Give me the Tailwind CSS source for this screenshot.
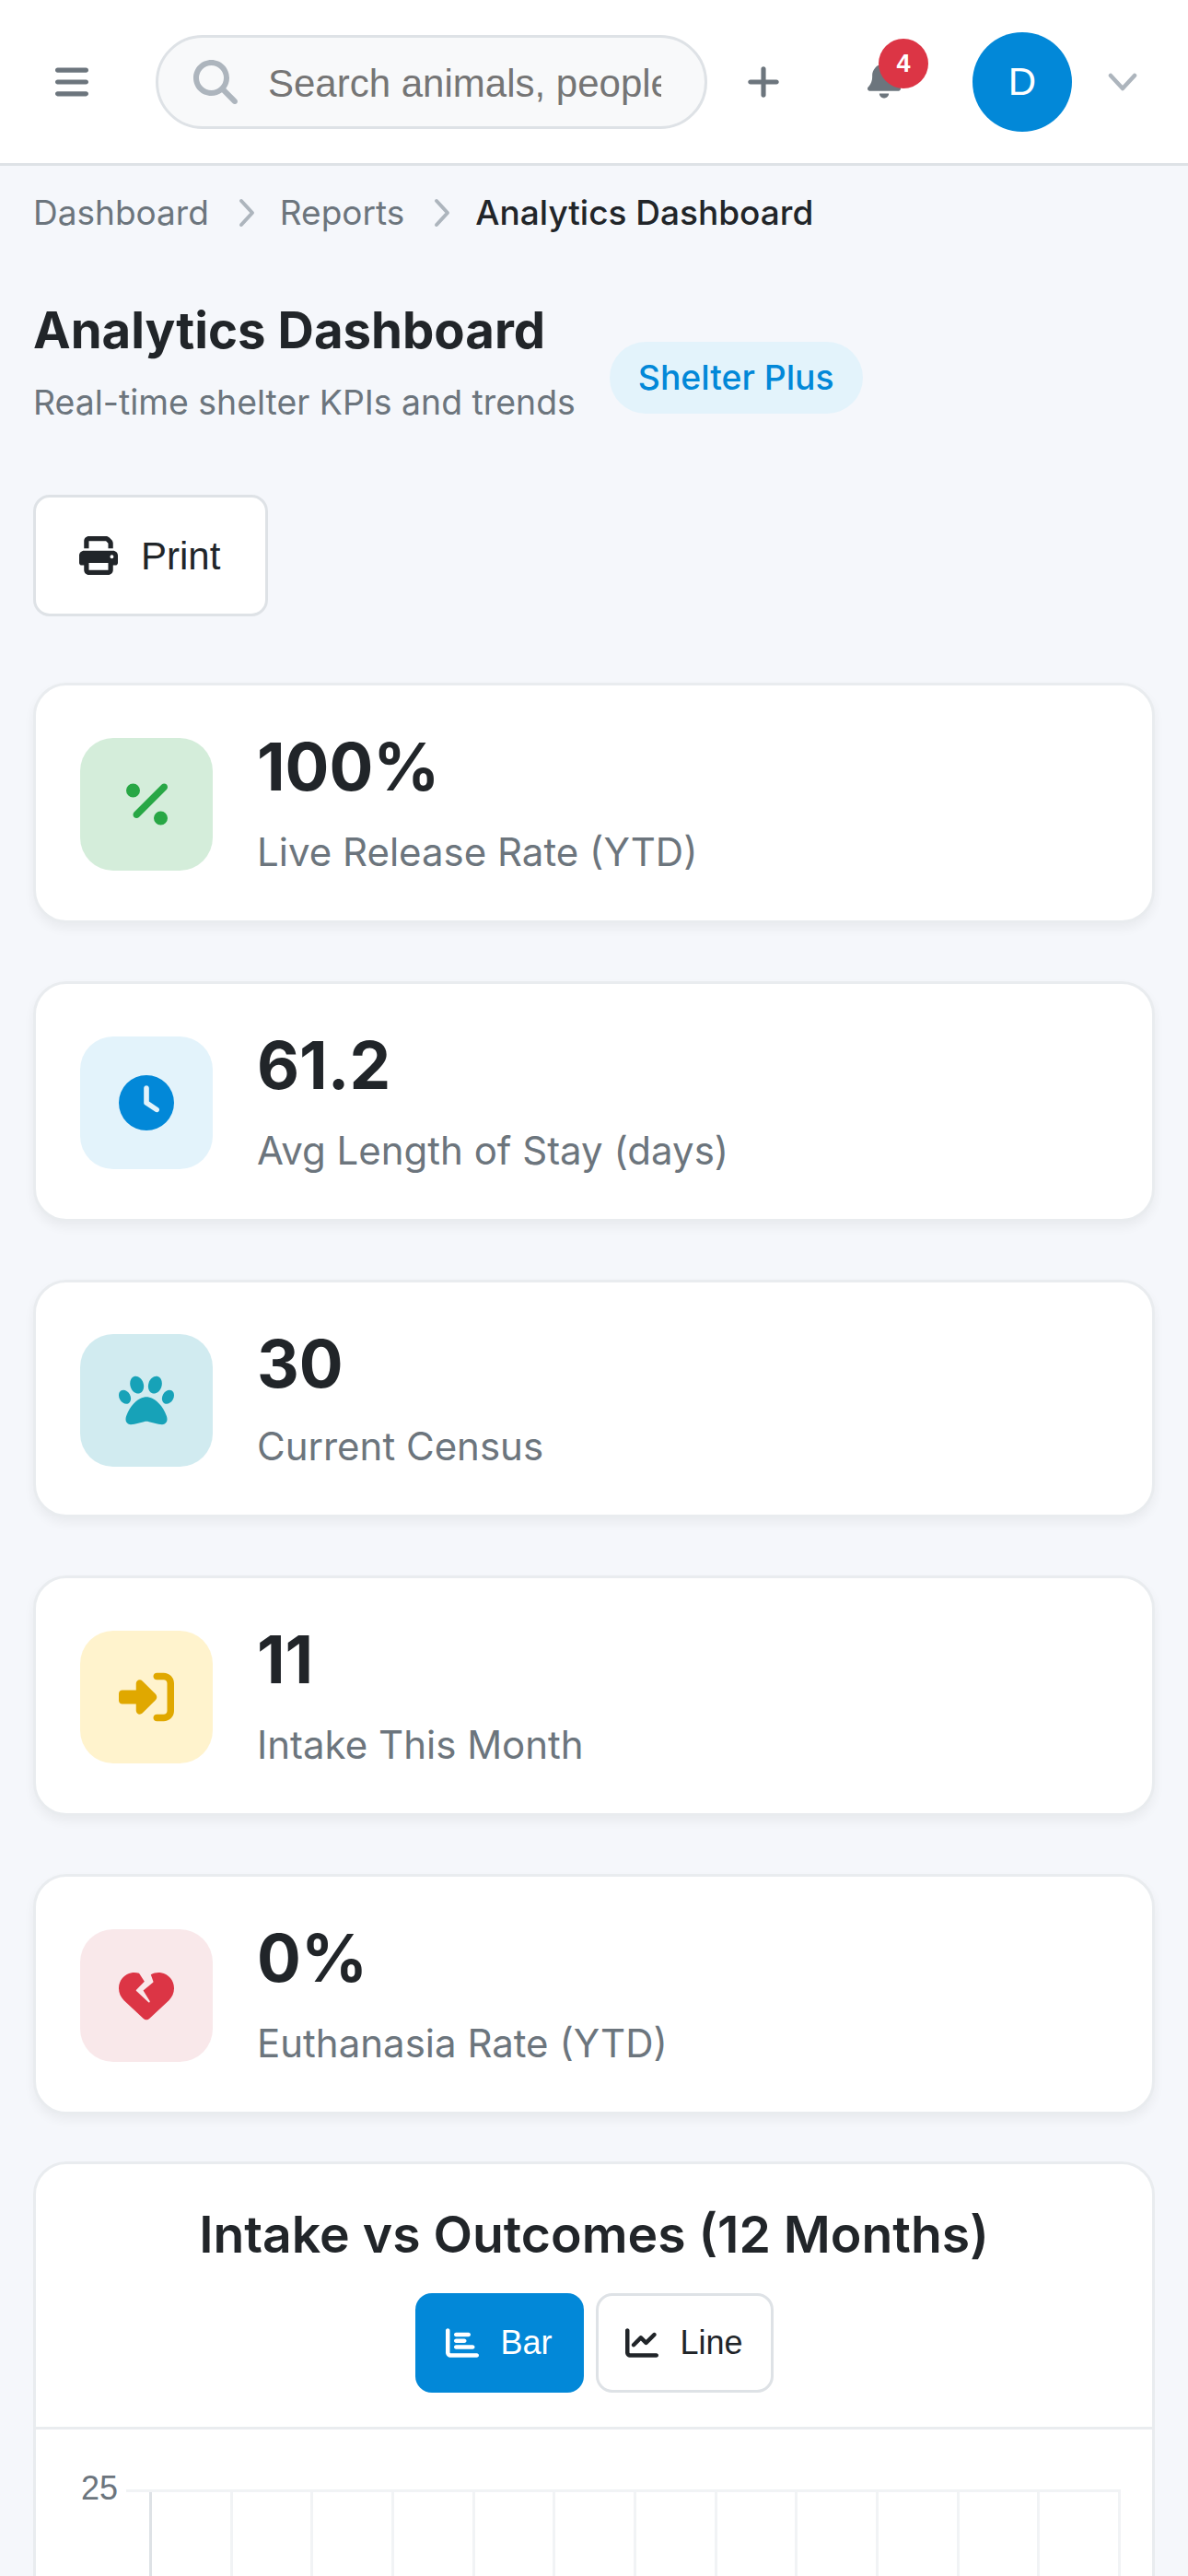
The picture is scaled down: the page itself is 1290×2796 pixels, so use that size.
<!DOCTYPE html>
<html lang="en">
  <head>
    <meta charset="UTF-8" />
    <title>Analytics Dashboard</title>
    <script src="https://cdn.jsdelivr.net/npm/@tailwindcss/browser@4"></script>
    <meta name="viewport" content="width=device-width, initial-scale=1.0" />
  </head>
  <body class="bg-[#f5f7fb] h-[2796px] overflow-hidden font-['Inter',sans-serif] text-[#212529]">
    <!-- Top bar -->
    <header class="h-[180px] bg-white border-b-[3px] border-[#dee2e6] flex items-center pl-[60px] relative">
      <svg class="w-[36px] h-[42px] fill-[#6c757d] shrink-0" viewBox="0 0 448 512"><path d="M0 96C0 78.3 14.3 64 32 64H416c17.7 0 32 14.3 32 32s-14.3 32-32 32H32C14.3 128 0 113.7 0 96zM0 256c0-17.7 14.3-32 32-32H416c17.7 0 32 14.3 32 32s-14.3 32-32 32H32c-17.7 0-32-14.3-32-32zM448 416c0 17.7-14.3 32-32 32H32c-17.7 0-32-14.3-32-32s14.3-32 32-32H416c17.7 0 32 14.3 32 32z"/></svg>
      <div class="ml-[73px] w-[599px] h-[102px] rounded-full border-[3px] border-[#dee2e6] bg-[#f8f9fa] flex items-center pl-[38px] pr-[47px] shrink-0">
        <svg class="w-[48px] h-[48px] fill-[#adb5bd] shrink-0" viewBox="0 0 512 512"><path d="M416 208c0 45.9-14.9 88.3-40 122.7L502.6 457.4c12.5 12.5 12.5 32.8 0 45.3s-32.8 12.5-45.3 0L330.7 376c-34.4 25.2-76.8 40-122.7 40C93.1 416 0 322.9 0 208S93.1 0 208 0S416 93.1 416 208zM208 352a144 144 0 1 0 0-288 144 144 0 1 0 0 288z"/></svg>
        <input class="ml-[33px] mt-[3px] min-w-0 flex-1 bg-transparent outline-none font-['Liberation_Sans',sans-serif] text-[42px] placeholder:text-[#757575]" placeholder="Search animals, people, and more" />
      </div>
      <svg class="ml-[43px] w-[36px] h-[42px] fill-[#6c757d] shrink-0" viewBox="0 0 448 512"><path d="M256 80c0-17.7-14.3-32-32-32s-32 14.3-32 32V224H48c-17.7 0-32 14.3-32 32s14.3 32 32 32H192V432c0 17.7 14.3 32 32 32s32-14.3 32-32V288H400c17.7 0 32-14.3 32-32s-14.3-32-32-32H256V80z"/></svg>
      <div class="ml-[95px] relative w-[36px] h-[42px] shrink-0 mt-[-5px]">
        <svg class="w-[36px] h-[42px] fill-[#6c757d]" viewBox="0 0 448 512"><path d="M224 0c-17.7 0-32 14.3-32 32V51.2C119 66 64 130.6 64 208v18.8c0 47-17.3 92.4-48.5 127.6l-7.4 8.3c-8.4 9.4-10.4 22.9-5.3 34.4S19.4 416 32 416H416c12.6 0 24-7.4 29.2-18.9s3.1-25-5.3-34.4l-7.4-8.3C401.3 319.2 384 273.9 384 226.8V208c0-77.4-55-142-128-156.8V32c0-17.7-14.3-32-32-32zm45.3 493.3c12-12 18.7-28.3 18.7-45.3H224 160c0 17 6.7 33.3 18.7 45.3s28.3 18.7 45.3 18.7s33.3-6.7 45.3-18.7z"/></svg>
        <span class="absolute left-[12px] top-[-23px] w-[54px] h-[54px] rounded-full bg-[#dc3545] text-white text-[27px] font-bold flex items-center justify-center font-['Liberation_Sans',sans-serif]">4</span>
      </div>
      <div class="ml-[78px] w-[108px] h-[108px] rounded-full bg-[#0288d8] text-white flex items-center justify-center text-[42px] font-['Liberation_Sans',sans-serif] shrink-0">D</div>
      <svg class="ml-[39px] w-[32px] h-[20px] shrink-0" viewBox="0 0 32 20" fill="none" stroke="#adb5bd" stroke-width="4.5" stroke-linecap="round" stroke-linejoin="round"><path d="M3 3l13 14L29 3"/></svg>
    </header>

    <main class="px-[36px]">
      <!-- Breadcrumb -->
      <nav class="flex items-center mt-[24px] h-[54px] text-[37px]">
        <span class="text-[#6c757d]">Dashboard</span>
        <svg class="ml-[31px] mr-[26px] w-[20px] h-[32px] shrink-0" viewBox="0 0 20 32" fill="none" stroke="#adb5bd" stroke-width="4" stroke-linecap="round" stroke-linejoin="round"><path d="M4 3l12 13L4 29"/></svg>
        <span class="text-[#6c757d]">Reports</span>
        <svg class="ml-[31px] mr-[26px] w-[20px] h-[32px] shrink-0" viewBox="0 0 20 32" fill="none" stroke="#adb5bd" stroke-width="4" stroke-linecap="round" stroke-linejoin="round"><path d="M4 3l12 13L4 29"/></svg>
        <span class="font-medium">Analytics Dashboard</span>
      </nav>

      <!-- Title -->
      <div class="flex items-center mt-[64px]">
        <div>
          <h1 class="text-[54.5px] leading-[72px] font-bold">Analytics Dashboard</h1>
          <p class="text-[37.4px] leading-[54px] mt-[16px] text-[#6c757d]">Real-time shelter KPIs and trends</p>
        </div>
        <span class="ml-[37px] mt-[34px] h-[78px] px-[31px] rounded-full bg-[#e3f3fb] text-[#0288d8] text-[37.3px] font-medium flex items-center">Shelter Plus</span>
      </div>

      <button class="mt-[73px] w-[255px] h-[132px] bg-white border-[3px] border-[#dee2e6] rounded-[18px] flex items-center pl-[47px] font-['Liberation_Sans',sans-serif] text-[42px]">
        <svg class="w-[42px] h-[42px] fill-[#212529] shrink-0" viewBox="0 0 512 512"><path d="M128 0C92.7 0 64 28.7 64 64v96h64V64H354.7L384 93.3V160h64V93.3c0-17-6.7-33.3-18.7-45.3L400 18.7C388 6.7 371.7 0 354.7 0H128zM384 352v32 64H128V384 368 352H384zm64 32h32c17.7 0 32-14.3 32-32V256c0-35.3-28.7-64-64-64H64c-35.3 0-64 28.7-64 64v96c0 17.7 14.3 32 32 32H64v64c0 35.3 28.7 64 64 64H384c35.3 0 64-28.7 64-64V384zM432 248a24 24 0 1 1 0 48 24 24 0 1 1 0-48z"/></svg>
        <span class="ml-[25px]">Print</span>
      </button>

      <!-- KPI cards -->
      <div class="mt-[72px] flex flex-col gap-[63px]">
        <div class="h-[261px] bg-white border-[3px] border-[#e9ecef] rounded-[36px] shadow-[0_6px_12px_rgba(0,0,0,0.05)] flex items-center pl-[48px]">
          <div class="mt-[3px] w-[144px] h-[144px] rounded-[36px] bg-[#d4edda] flex items-center justify-center shrink-0">
            <svg class="w-[45px] h-[60px] fill-[#28a745]" viewBox="0 0 384 512"><path d="M374.6 118.6c12.5-12.5 12.5-32.8 0-45.3s-32.8-12.5-45.3 0l-256 256c-12.5 12.5-12.5 32.8 0 45.3s32.8 12.5 45.3 0l256-256zM128 128A64 64 0 1 0 0 128a64 64 0 1 0 128 0zM384 384a64 64 0 1 0 -128 0 64 64 0 1 0 128 0z"/></svg>
          </div>
          <div class="ml-[48px]">
            <div class="text-[71px] leading-[86px] font-bold">100%</div>
            <div class="text-[42px] leading-[58px] mt-[21px] text-[#6c757d]">Live Release Rate (YTD)</div>
          </div>
        </div>
        <div class="h-[261px] bg-white border-[3px] border-[#e9ecef] rounded-[36px] shadow-[0_6px_12px_rgba(0,0,0,0.05)] flex items-center pl-[48px]">
          <div class="mt-[3px] w-[144px] h-[144px] rounded-[36px] bg-[#e3f3fb] flex items-center justify-center shrink-0">
            <svg class="w-[60px] h-[60px] fill-[#0288d8]" viewBox="0 0 512 512"><path d="M256 0a256 256 0 1 1 0 512A256 256 0 1 1 256 0zM232 120V256c0 8 4 15.5 10.7 20l96 64c11 7.4 25.9 4.4 33.3-6.7s4.4-25.9-6.7-33.3L280 243.2V120c0-13.3-10.7-24-24-24s-24 10.7-24 24z"/></svg>
          </div>
          <div class="ml-[48px]">
            <div class="text-[71px] leading-[86px] font-bold">61.2</div>
            <div class="text-[42px] leading-[58px] mt-[21px] text-[#6c757d]">Avg Length of Stay (days)</div>
          </div>
        </div>
        <div class="h-[258px] bg-white border-[3px] border-[#e9ecef] rounded-[36px] shadow-[0_6px_12px_rgba(0,0,0,0.05)] flex items-center pl-[48px]">
          <div class="mt-[3px] w-[144px] h-[144px] rounded-[36px] bg-[#d1ebf0] flex items-center justify-center shrink-0">
            <svg class="w-[60px] h-[60px] fill-[#17a2b8]" viewBox="0 0 512 512"><path d="M226.5 92.9c14.3 42.9-.3 86.2-32.6 96.8s-70.1-15.6-84.4-58.5s.3-86.2 32.6-96.8s70.1 15.6 84.4 58.5zM100.4 198.6c18.9 32.4 14.3 70.1-10.2 84.1s-59.7-.9-78.5-33.3S-2.7 179.3 21.8 165.3s59.7 .9 78.5 33.3zM69.2 401.2C121.6 259.9 214.7 224 256 224s134.4 35.9 186.8 177.2c3.6 9.7 5.2 20.1 5.2 30.5v1.6c0 25.8-20.9 46.7-46.7 46.7c-11.5 0-22.9-1.4-34-4.2l-88-22c-15.3-3.8-31.3-3.8-46.6 0l-88 22c-11.1 2.8-22.5 4.2-34 4.2C84.9 480 64 459.1 64 433.3v-1.6c0-10.4 1.6-20.8 5.2-30.5zM421.8 282.7c-24.5-14-29.1-51.7-10.2-84.1s54-47.3 78.5-33.3s29.1 51.7 10.2 84.1s-54 47.3-78.5 33.3zM310.1 189.7c-32.3-10.6-46.9-53.9-32.6-96.8s52.1-69.1 84.4-58.5s46.9 53.9 32.6 96.8s-52.1 69.1-84.4 58.5z"/></svg>
          </div>
          <div class="ml-[48px]">
            <div class="text-[71px] leading-[86px] font-bold">30</div>
            <div class="text-[42px] leading-[58px] mt-[18px] text-[#6c757d]">Current Census</div>
          </div>
        </div>
        <div class="h-[261px] bg-white border-[3px] border-[#e9ecef] rounded-[36px] shadow-[0_6px_12px_rgba(0,0,0,0.05)] flex items-center pl-[48px]">
          <div class="mt-[3px] w-[144px] h-[144px] rounded-[36px] bg-[#fff3cd] flex items-center justify-center shrink-0">
            <svg class="w-[60px] h-[60px] fill-[#e0a800]" viewBox="0 0 512 512"><path d="M217.9 105.9L340.7 228.7c7.2 7.2 11.3 17.1 11.3 27.3s-4.1 20.1-11.3 27.3L217.9 406.1c-6.4 6.4-15 9.9-24 9.9c-18.7 0-33.9-15.2-33.9-33.9l0-62.1L32 320c-17.7 0-32-14.3-32-32l0-64c0-17.7 14.3-32 32-32l128 0 0-62.1c0-18.7 15.2-33.9 33.9-33.9c9 0 17.6 3.6 24 9.9zM352 416l64 0c17.7 0 32-14.3 32-32l0-256c0-17.7-14.3-32-32-32l-64 0c-17.7 0-32-14.3-32-32s14.3-32 32-32l64 0c53 0 96 43 96 96l0 256c0 53-43 96-96 96l-64 0c-17.7 0-32-14.3-32-32s14.3-32 32-32z"/></svg>
          </div>
          <div class="ml-[48px]">
            <div class="text-[71px] leading-[86px] font-bold">11</div>
            <div class="text-[42px] leading-[58px] mt-[21px] text-[#6c757d]">Intake This Month</div>
          </div>
        </div>
        <div class="h-[261px] bg-white border-[3px] border-[#e9ecef] rounded-[36px] shadow-[0_6px_12px_rgba(0,0,0,0.05)] flex items-center pl-[48px]">
          <div class="mt-[3px] w-[144px] h-[144px] rounded-[36px] bg-[#f9e8ea] flex items-center justify-center shrink-0">
            <svg class="w-[60px] h-[60px] fill-[#dc3545]" viewBox="0 0 512 512"><path d="M119.4 44.1c23.3-3.9 46.8-1.9 68.6 5.3l49.8 77.5-75.4 75.4c-1.5 1.5-2.4 3.6-2.3 5.8s1 4.2 2.6 5.7l112 104c2.9 2.7 7.4 2.9 10.5 .3s3.8-7 1.7-10.4l-60.4-98.1 90.7-75.6c2.6-2.1 3.5-5.7 2.4-8.8L296.8 61.8c28.5-16.7 62.4-23.2 95.7-17.6C461.5 55.6 512 115.2 512 185.1v5.8c0 41.5-17.2 81.2-47.6 109.5L283.7 469.1c-7.5 7-17.4 10.9-27.7 10.9s-20.2-3.9-27.7-10.9L47.6 300.4C17.2 272.1 0 232.4 0 190.9v-5.8c0-69.9 50.5-129.5 119.4-141z"/></svg>
          </div>
          <div class="ml-[48px]">
            <div class="text-[71px] leading-[86px] font-bold">0%</div>
            <div class="text-[42px] leading-[58px] mt-[21px] text-[#6c757d]">Euthanasia Rate (YTD)</div>
          </div>
        </div>
      </div>

      <!-- Chart card -->
      <section class="mt-[51px] bg-white border-[3px] border-[#e9ecef] rounded-[36px] h-[600px]">
        <div class="h-[288px] border-b-[3px] border-[#e9ecef] flex flex-col items-center">
          <h2 class="mt-[41px] text-[55.3px] leading-[70px] font-semibold">Intake vs Outcomes (12 Months)</h2>
          <div class="mt-[29px] flex gap-[13px] font-['Liberation_Sans',sans-serif] text-[36px]">
            <button class="w-[183px] h-[108px] rounded-[18px] bg-[#0288d8] text-white flex items-center pl-[33px]">
              <svg class="w-[36px] h-[36px] fill-white shrink-0" viewBox="0 0 512 512"><path d="M32 32c17.7 0 32 14.3 32 32V400c0 8.8 7.2 16 16 16H480c17.7 0 32 14.3 32 32s-14.3 32-32 32H80c-44.2 0-80-35.8-80-80V64C0 46.3 14.3 32 32 32zm96 96c0-17.7 14.3-32 32-32l192 0c17.7 0 32 14.3 32 32s-14.3 32-32 32l-192 0c-17.7 0-32-14.3-32-32zm32 64H288c17.7 0 32 14.3 32 32s-14.3 32-32 32H160c-17.7 0-32-14.3-32-32s14.3-32 32-32zm0 96H416c17.7 0 32 14.3 32 32s-14.3 32-32 32H160c-17.7 0-32-14.3-32-32s14.3-32 32-32z"/></svg>
              <span class="ml-[24px]">Bar</span>
            </button>
            <button class="w-[193px] h-[108px] rounded-[18px] bg-white border-[3px] border-[#dee2e6] flex items-center pl-[29px]">
              <svg class="w-[36px] h-[36px] fill-[#212529] shrink-0" viewBox="0 0 512 512"><path d="M64 64c0-17.7-14.3-32-32-32S0 46.3 0 64V400c0 44.2 35.8 80 80 80H480c17.7 0 32-14.3 32-32s-14.3-32-32-32H80c-8.8 0-16-7.2-16-16V64zm406.6 86.6c12.5-12.5 12.5-32.8 0-45.3s-32.8-12.5-45.3 0L320 210.7l-57.4-57.4c-12.5-12.5-32.8-12.5-45.3 0l-112 112c-12.5 12.5-12.5 32.8 0 45.3s32.8 12.5 45.3 0L240 221.3l57.4 57.4c12.5 12.5 32.8 12.5 45.3 0l128-128z"/></svg>
              <span class="ml-[24px]">Line</span>
            </button>
          </div>
        </div>
        <!-- Chart grid -->
        <div class="flex mt-[65px] pl-[49px]">
          <span class="w-[74px] shrink-0 text-[36px] leading-[36px] mt-[-19px] text-[#6c757d] font-['Liberation_Sans',sans-serif]">25</span>
          <div class="relative w-[1055px] shrink-0">
            <div class="absolute left-[-25px] right-0 top-0 h-[3px] bg-[#f1f3f5]"></div>
            <div class="flex h-[200px] pt-[3px]">
              <div class="flex-1 border-l-[3px] border-[#dee2e6]"></div>
              <div class="flex-1 border-l-[3px] border-[#f1f3f5]"></div>
              <div class="flex-1 border-l-[3px] border-[#f1f3f5]"></div>
              <div class="flex-1 border-l-[3px] border-[#f1f3f5]"></div>
              <div class="flex-1 border-l-[3px] border-[#f1f3f5]"></div>
              <div class="flex-1 border-l-[3px] border-[#f1f3f5]"></div>
              <div class="flex-1 border-l-[3px] border-[#f1f3f5]"></div>
              <div class="flex-1 border-l-[3px] border-[#f1f3f5]"></div>
              <div class="flex-1 border-l-[3px] border-[#f1f3f5]"></div>
              <div class="flex-1 border-l-[3px] border-[#f1f3f5]"></div>
              <div class="flex-1 border-l-[3px] border-[#f1f3f5]"></div>
              <div class="flex-1 border-x-[3px] border-[#f1f3f5]"></div>
            </div>
          </div>
        </div>
      </section>
    </main>
  </body>
</html>
